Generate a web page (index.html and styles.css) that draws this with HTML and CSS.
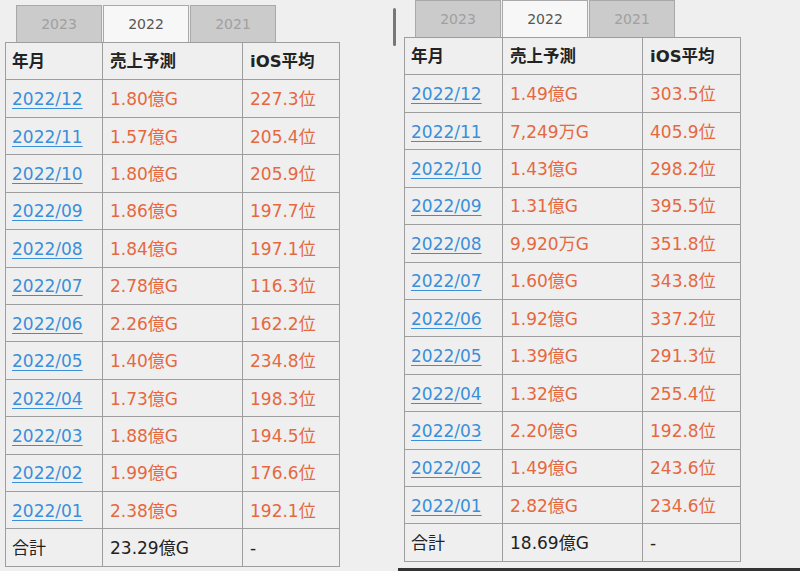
FILE: index.html
```html
<!DOCTYPE html>
<html lang="ja">
<head>
<meta charset="utf-8">
<link rel="stylesheet" href="styles.css">
</head>
<body>
<div class="screen">
  <section class="panel panel-left">
    <div class="content">
      <div class="tabs">
        <div class="tab">2023</div>
        <div class="tab active">2022</div>
        <div class="tab">2021</div>
      </div>
      <table class="sales">
        <colgroup><col class="c1"><col class="c2"><col class="c3"></colgroup>
        <tr class="head"><th>年月</th><th>売上予測</th><th>iOS平均</th></tr>
        <tr><td><a href="#">2022/12</a></td><td class="val">1.80億G</td><td class="val">227.3位</td></tr>
        <tr><td><a href="#">2022/11</a></td><td class="val">1.57億G</td><td class="val">205.4位</td></tr>
        <tr><td><a href="#">2022/10</a></td><td class="val">1.80億G</td><td class="val">205.9位</td></tr>
        <tr><td><a href="#">2022/09</a></td><td class="val">1.86億G</td><td class="val">197.7位</td></tr>
        <tr><td><a href="#">2022/08</a></td><td class="val">1.84億G</td><td class="val">197.1位</td></tr>
        <tr><td><a href="#">2022/07</a></td><td class="val">2.78億G</td><td class="val">116.3位</td></tr>
        <tr><td><a href="#">2022/06</a></td><td class="val">2.26億G</td><td class="val">162.2位</td></tr>
        <tr><td><a href="#">2022/05</a></td><td class="val">1.40億G</td><td class="val">234.8位</td></tr>
        <tr><td><a href="#">2022/04</a></td><td class="val">1.73億G</td><td class="val">198.3位</td></tr>
        <tr><td><a href="#">2022/03</a></td><td class="val">1.88億G</td><td class="val">194.5位</td></tr>
        <tr><td><a href="#">2022/02</a></td><td class="val">1.99億G</td><td class="val">176.6位</td></tr>
        <tr><td><a href="#">2022/01</a></td><td class="val">2.38億G</td><td class="val">192.1位</td></tr>
        <tr><td>合計</td><td>23.29億G</td><td>-</td></tr>
      </table>
    </div>
    <div class="scrollbar"></div>
  </section>
  <section class="panel panel-right">
    <div class="content">
      <div class="tabs">
        <div class="tab">2023</div>
        <div class="tab active">2022</div>
        <div class="tab">2021</div>
      </div>
      <table class="sales wide">
        <colgroup><col class="c1"><col class="c2"><col class="c3"></colgroup>
        <tr class="head"><th>年月</th><th>売上予測</th><th>iOS平均</th></tr>
        <tr><td><a href="#">2022/12</a></td><td class="val">1.49億G</td><td class="val">303.5位</td></tr>
        <tr><td><a href="#">2022/11</a></td><td class="val">7,249万G</td><td class="val">405.9位</td></tr>
        <tr><td><a href="#">2022/10</a></td><td class="val">1.43億G</td><td class="val">298.2位</td></tr>
        <tr><td><a href="#">2022/09</a></td><td class="val">1.31億G</td><td class="val">395.5位</td></tr>
        <tr><td><a href="#">2022/08</a></td><td class="val">9,920万G</td><td class="val">351.8位</td></tr>
        <tr><td><a href="#">2022/07</a></td><td class="val">1.60億G</td><td class="val">343.8位</td></tr>
        <tr><td><a href="#">2022/06</a></td><td class="val">1.92億G</td><td class="val">337.2位</td></tr>
        <tr><td><a href="#">2022/05</a></td><td class="val">1.39億G</td><td class="val">291.3位</td></tr>
        <tr><td><a href="#">2022/04</a></td><td class="val">1.32億G</td><td class="val">255.4位</td></tr>
        <tr><td><a href="#">2022/03</a></td><td class="val">2.20億G</td><td class="val">192.8位</td></tr>
        <tr><td><a href="#">2022/02</a></td><td class="val">1.49億G</td><td class="val">243.6位</td></tr>
        <tr><td><a href="#">2022/01</a></td><td class="val">2.82億G</td><td class="val">234.6位</td></tr>
        <tr><td>合計</td><td>18.69億G</td><td>-</td></tr>
      </table>
    </div>
    <div class="bottom-line"></div>
  </section>
</div>
</body>
</html>
```
FILE: styles.css
```css
html, body {
  margin: 0;
  padding: 0;
  background: #efefef;
  width: 800px;
  height: 571px;
  overflow: hidden;
}

body {
  font-family: "DejaVu Sans", "Noto Sans CJK JP", sans-serif;
  color: #222;
}

.screen {
  display: flex;
  height: 571px;
}

.panel {
  height: 571px;
}

.panel-left {
  width: 398px;
  display: flex;
}

.panel-left .content {
  padding: 5px 0 0 5px;
  width: 388px;
}

.scrollbar {
  width: 3px;
  height: 38px;
  margin-top: 8px;
  background: #777;
  border-radius: 2px;
}

.panel-right {
  width: 402px;
  display: flex;
  flex-direction: column;
}

.panel-right .content {
  padding: 0 0 0 6px;
  flex: 1;
}

.bottom-line {
  height: 3px;
  background: #333;
}

.tabs {
  display: flex;
  gap: 1px;
  padding-left: 11px;
  height: 37px;
}

.tab {
  width: 84px;
  height: 36px;
  border: 1px solid #a9a9a9;
  border-bottom: none;
  background: #cbcbcb;
  color: #a0a0a0;
  font-size: 14px;
  display: flex;
  align-items: center;
  justify-content: center;
}

.tab.active {
  background: #f7f7f7;
  color: #555;
}

.sales {
  border-collapse: collapse;
  width: 334px;
  table-layout: fixed;
  font-size: 17px;
}

.sales.wide {
  width: 336px;
}

.sales col.c1 { width: 97px; }
.sales col.c2 { width: 140px; }
.sales col.c3 { width: 97px; }
.sales.wide col.c1 { width: 98px; }
.sales.wide col.c3 { width: 98px; }

.sales tr {
  height: 37.43px;
}

.sales th,
.sales td {
  border: 1.5px solid #9e9e9e;
  padding: 1px 0 0 6px;
  text-align: left;
  vertical-align: middle;
  font-weight: normal;
  line-height: 20px;
  white-space: nowrap;
}

.sales th {
  font-weight: bold;
  color: #222;
  font-size: 16.5px;
}

.sales td:nth-child(2), .sales th:nth-child(2),
.sales td:nth-child(3), .sales th:nth-child(3) { padding-left: 7px; }

.sales a {
  color: #3a8fd9;
  text-decoration: underline;
  text-underline-offset: 3px;
  text-decoration-thickness: 1px;
}

.sales td.val {
  color: #e5683f;
}
```
